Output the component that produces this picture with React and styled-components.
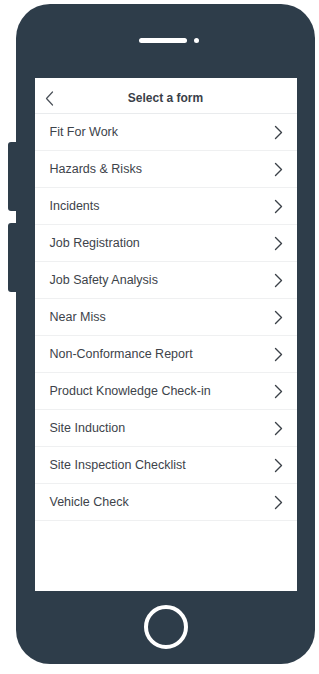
import styled, { createGlobalStyle } from "styled-components"

const forms = [
    "Fit For Work",
    "Hazards & Risks",
    "Incidents",
    "Job Registration",
    "Job Safety Analysis",
    "Near Miss",
    "Non-Conformance Report",
    "Product Knowledge Check-in",
    "Site Induction",
    "Site Inspection Checklist",
    "Vehicle Check",
]

export default function App(){
    return (
        <>
            <GlobalStyle />
            <Wrapper>
                <SideKeys>
                    <SideKey />
                    <SideKey />
                </SideKeys>
                <Phone>
                    <Earpiece>
                        <Speaker />
                        <Camera />
                    </Earpiece>
                    <Screen>
                        <Header>
                            <BackButton>
                                <svg width="9" height="15" viewBox="0 0 9 15">
                                    <polyline points="7.5,1 1.5,7.5 7.5,14" fill="none" stroke="#4a5058" strokeWidth="1.2" strokeLinecap="round" strokeLinejoin="round" />
                                </svg>
                            </BackButton>
                            <Title>Select a form</Title>
                        </Header>
                        <List>
                            {forms.map((name) => (
                                <Row key={name}>
                                    <span>{name}</span>
                                    <svg width="9" height="15" viewBox="0 0 9 15">
                                        <polyline points="1.5,1.5 7.5,7.5 1.5,13.5" fill="none" stroke="#3b4148" strokeWidth="1.4" strokeLinecap="round" strokeLinejoin="round" />
                                    </svg>
                                </Row>
                            ))}
                        </List>
                    </Screen>
                    <HomeButton />
                </Phone>
            </Wrapper>
        </>
    )
}

const GlobalStyle = createGlobalStyle`
    body {
        margin: 0;
        background: #FFFFFF;
        font-family: "Liberation Sans", Arial, sans-serif;
    }
`

const Wrapper = styled.div`
    display: flex;
    padding: 4px 0 0 8px;
`

const SideKeys = styled.div`
    display: flex;
    flex-direction: column;
    gap: 12px;
    margin-top: 138px;
`

const SideKey = styled.div`
    width: 8px;
    height: 69px;
    background: #2e3d4a;
    border-radius: 3px 0 0 3px;
`

const Phone = styled.div`
    width: 299px;
    height: 660px;
    box-sizing: border-box;
    background: #2e3d4a;
    border-radius: 34px;
    display: flex;
    flex-direction: column;
    align-items: center;
    padding-top: 33px;
`

const Earpiece = styled.div`
    display: flex;
    align-items: center;
    gap: 7px;
    height: 6px;
    margin-left: 7px;
`

const Speaker = styled.div`
    width: 48px;
    height: 5px;
    border-radius: 3px;
    background: #FFFFFF;
`

const Camera = styled.div`
    width: 5px;
    height: 5px;
    border-radius: 50%;
    background: #FFFFFF;
`

const Screen = styled.div`
    width: 262px;
    height: 513px;
    margin-top: 35px;
    background: #FFFFFF;
    display: flex;
    flex-direction: column;
`

const Header = styled.div`
    height: 30px;
    padding-top: 5px;
    display: flex;
    align-items: center;
    justify-content: center;
    position: relative;
    border-bottom: 1px solid #e9ebed;
`

const BackButton = styled.div`
    position: absolute;
    left: 10px;
    top: 13px;
    display: flex;
`

const Title = styled.div`
    font-size: 12px;
    font-weight: 700;
    color: #3a4049;
`

const List = styled.div`
    display: flex;
    flex-direction: column;
`

const Row = styled.div`
    height: 36px;
    display: flex;
    align-items: center;
    justify-content: space-between;
    padding: 0 14px 0 15px;
    border-bottom: 1px solid #eff0f1;
    font-size: 12.5px;
    color: #3d434a;
`

const HomeButton = styled.div`
    width: 44px;
    height: 44px;
    box-sizing: border-box;
    margin-top: 14px;
    border: 4px solid #FFFFFF;
    border-radius: 50%;
`
